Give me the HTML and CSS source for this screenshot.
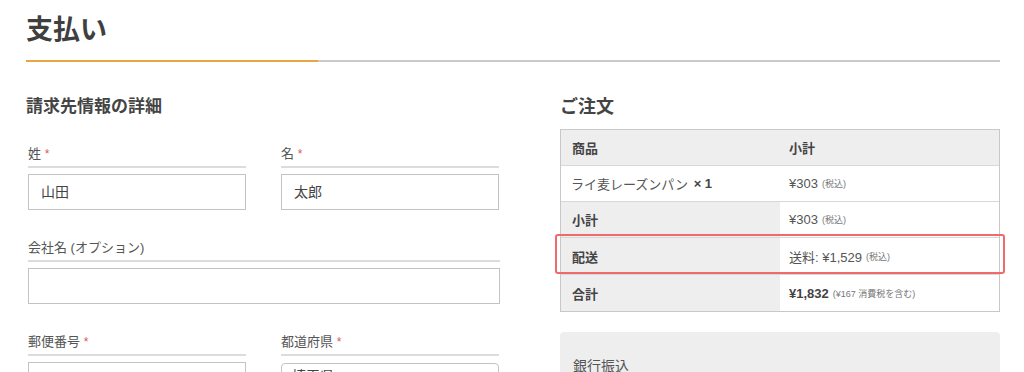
FILE: index.html
```html
<!DOCTYPE html>
<html lang="ja">
<head>
<meta charset="utf-8">
<title>支払い</title>
<link rel="stylesheet" href="styles.css">
</head>
<body>
<div class="page">
  <header class="page-header">
    <h1 class="page-title">支払い</h1>
  </header>
  <div class="columns">
    <section class="billing">
      <h2 class="section-title">請求先情報の詳細</h2>
      <div class="form-row two">
        <div class="field">
          <div class="label">姓 <span class="req">*</span></div>
          <div class="input">山田</div>
        </div>
        <div class="field">
          <div class="label">名 <span class="req">*</span></div>
          <div class="input">太郎</div>
        </div>
      </div>
      <div class="form-row">
        <div class="field">
          <div class="label">会社名 (オプション)</div>
          <div class="input"></div>
        </div>
      </div>
      <div class="form-row two">
        <div class="field">
          <div class="label">郵便番号 <span class="req">*</span></div>
          <div class="input"></div>
        </div>
        <div class="field">
          <div class="label">都道府県 <span class="req">*</span></div>
          <div class="input select">埼玉県</div>
        </div>
      </div>
    </section>
    <section class="order">
      <h2 class="section-title order-title">ご注文</h2>
      <div class="order-table">
        <div class="row head">
          <div class="cell key">商品</div>
          <div class="cell val">小計</div>
        </div>
        <div class="row item">
          <div class="cell name">ライ麦レーズンパン&nbsp; <strong class="qty">× 1</strong></div>
          <div class="cell val num">¥303 <small>(税込)</small></div>
        </div>
        <div class="row">
          <div class="cell key">小計</div>
          <div class="cell val num">¥303 <small>(税込)</small></div>
        </div>
        <div class="row tall">
          <div class="cell key">配送</div>
          <div class="cell val num">送料: ¥1,529 <small>(税込)</small></div>
        </div>
        <div class="row tall">
          <div class="cell key">合計</div>
          <div class="cell val num"><strong>¥1,832</strong> <small>(¥167 消費税を含む)</small></div>
        </div>
        <div class="highlight"></div>
      </div>
      <div class="payment">
        <div class="method">銀行振込</div>
      </div>
    </section>
  </div>
</div>
</body>
</html>
```

FILE: styles.css
```css
html, body {
  margin: 0;
  padding: 0;
  overflow: hidden;
  background: #fff;
}

body {
  font-family: "Liberation Sans", "Noto Sans CJK JP", sans-serif;
  color: #555;
}

.page {
  width: 974px;
  padding-left: 26px;
}

.page-header {
  position: relative;
  padding-top: 12px;
  padding-bottom: 12px;
  border-bottom: 2px solid #c9c9c9;
}

.page-header::after {
  content: "";
  position: absolute;
  left: 0;
  bottom: -2px;
  width: 292px;
  height: 2px;
  background: #e9a443;
}

.page-title {
  margin: 0;
  font-size: 27px;
  line-height: 36px;
  font-weight: 700;
  color: #3f3f3f;
}

.columns {
  display: grid;
  grid-template-columns: 474px 440px;
  column-gap: 60px;
  margin-top: 33px;
}

.section-title {
  margin: 0;
  font-size: 17px;
  line-height: 24px;
  font-weight: 700;
  color: #444;
}

.billing .section-title {
  margin-bottom: 25px;
}

.form-row {
  padding-left: 2px;
  margin-bottom: 28px;
}

.form-row.two {
  display: grid;
  grid-template-columns: 218px 218px;
  column-gap: 35px;
}

.label {
  font-size: 13px;
  line-height: 20px;
  padding-bottom: 2px;
  border-bottom: 2px solid #dcdcdc;
  color: #555;
}

.req {
  color: #e0565b;
  font-size: 12px;
}

.input {
  box-sizing: border-box;
  height: 36px;
  margin-top: 6px;
  border: 1px solid #c3c3c3;
  padding: 0 12px;
  font-size: 14px;
  line-height: 34px;
  color: #444;
  background: #fff;
}

.input.select {
  margin-top: 7px;
  border-radius: 4px;
  padding-left: 10px;
  line-height: 24px;
}

.order-title {
  font-size: 18px;
  margin-bottom: 10px;
}

.order-table {
  position: relative;
  border: 1px solid #c8c8c8;
  font-size: 13px;
  color: #555;
}

.row {
  display: grid;
  grid-template-columns: 219px 1fr;
  height: 36px;
  box-sizing: border-box;
  border-top: 1px solid #d8d8d8;
}

.row.tall {
  height: 37px;
}

.row:first-child {
  border-top: 0;
  height: 35px;
}

.row.head {
  background: #eeeeee;
}

.cell {
  display: flex;
  align-items: center;
  white-space: nowrap;
}

.cell.key {
  background: #eeeeee;
  padding-left: 11px;
  font-weight: 700;
  color: #444;
}

.cell.name {
  padding-left: 10px;
}

.qty {
  font-weight: 700;
  margin-left: 2px;
  color: #444;
}

.cell.val {
  padding-left: 9px;
}

.row.head .cell.val {
  font-weight: 700;
  color: #444;
}

.cell.val small {
  font-size: 9px;
  color: #777;
  margin-left: 4px;
}

.cell.val strong {
  color: #444;
}

.highlight {
  position: absolute;
  left: -6px;
  top: 104px;
  width: 450px;
  height: 40px;
  box-sizing: border-box;
  border: 2px solid #f06a6c;
  border-radius: 3px;
}

.payment {
  margin-top: 20px;
  background: #eeeeee;
  border-radius: 4px;
  height: 80px;
  padding: 24px 13px 0;
}

.method {
  font-size: 14px;
  line-height: 20px;
  color: #555;
}
```
